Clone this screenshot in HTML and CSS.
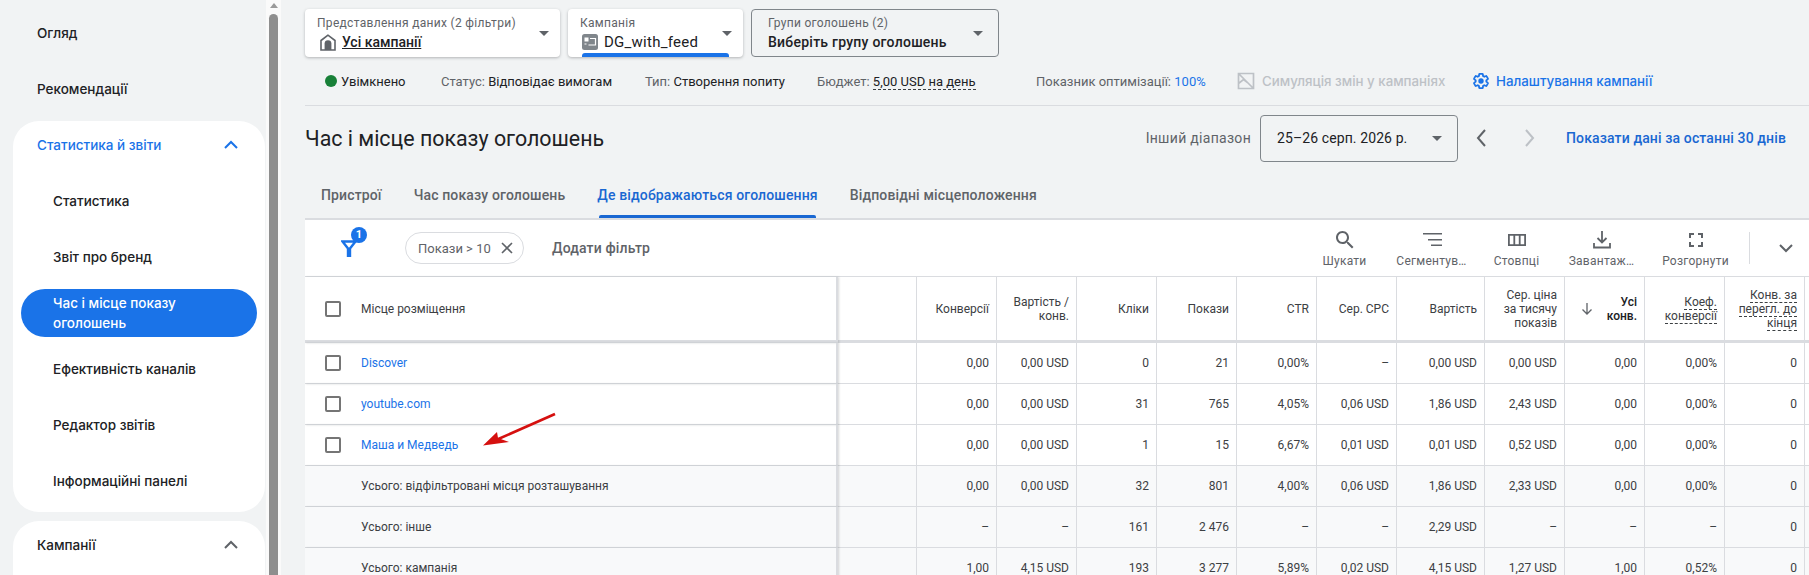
FILE: index.html
```html
<!DOCTYPE html>
<html lang="uk">
<head>
<meta charset="utf-8">
<title>Час і місце показу оголошень</title>
<link rel="stylesheet" href="styles.css">
</head>
<body>
<div class="app">
  <nav class="sidebar">
    <div class="nav-row">Огляд</div>
    <div class="nav-row">Рекомендації</div>
    <div class="panel panel-main">
      <div class="panel-head active-head"><span>Статистика й звіти</span>
        <svg class="chev" width="18" height="18" viewBox="0 0 18 18"><path d="M3 12l6-6 6 6" fill="none" stroke="currentColor" stroke-width="2"/></svg>
      </div>
      <div class="nav-sub">Статистика</div>
      <div class="nav-sub">Звіт про бренд</div>
      <div class="nav-sub-wrap"><div class="nav-pill">Час і місце показу оголошень</div></div>
      <div class="nav-sub">Ефективність каналів</div>
      <div class="nav-sub">Редактор звітів</div>
      <div class="nav-sub">Інформаційні панелі</div>
    </div>
    <div class="panel panel-second">
      <div class="panel-head"><span>Кампанії</span>
        <svg class="chev" width="18" height="18" viewBox="0 0 18 18"><path d="M3 12l6-6 6 6" fill="none" stroke="currentColor" stroke-width="2"/></svg>
      </div>
    </div>
  </nav>
  <div class="scrollbar">
    <div class="scroll-up"></div>
    <div class="scroll-thumb"></div>
  </div>
  <main class="main">
    <div class="pickers">
      <div class="picker picker-view">
        <div class="picker-text">
          <div class="picker-label">Представлення даних (2 фільтри)</div>
          <div class="picker-value">
            <svg class="picker-icon" width="16" height="17" viewBox="0 0 16 17"><path d="M8 1.2L1 6.5V16h14V6.5z" fill="#fff" stroke="#5f6368" stroke-width="1.6"/><path d="M4.6 16V9.6a3.4 3.4 0 0 1 6.8 0V16z" fill="#5f6368"/></svg>
            <span class="link-under">Усі кампанії</span>
          </div>
        </div>
        <span class="tri"></span>
      </div>
      <div class="picker picker-camp">
        <div class="picker-text">
          <div class="picker-label">Кампанія</div>
          <div class="picker-value">
            <svg class="picker-icon" width="16" height="16" viewBox="0 0 16 16"><rect x="0" y="0" width="16" height="16" rx="2.5" fill="#80868b"/><rect x="2.5" y="3.5" width="4" height="4" fill="#fff"/><path d="M8 4.5h5.5v6.5H6.5M2.5 10h2" fill="none" stroke="#fff" stroke-width="1.2"/></svg>
            <span>DG_with_feed</span>
          </div>
        </div>
        <span class="tri"></span>
        <span class="picker-bar"></span>
      </div>
      <div class="picker picker-group">
        <div class="picker-text">
          <div class="picker-label">Групи оголошень (2)</div>
          <div class="picker-value"><span>Виберіть групу оголошень</span></div>
        </div>
        <span class="tri"></span>
      </div>
    </div>

    <div class="status-row">
      <span class="dot"></span>
      <span class="st st-on">Увімкнено</span>
      <span class="st st-status"><span class="muted">Статус:</span> Відповідає вимогам</span>
      <span class="st st-type"><span class="muted">Тип:</span> Створення попиту</span>
      <span class="st st-budget"><span class="muted">Бюджет:</span> <span class="dashed">5,00 USD на день</span></span>
      <span class="st st-score"><span class="muted">Показник оптимізації:</span> <span class="blue">100%</span></span>
      <svg class="sim-icon" width="18" height="18" viewBox="0 0 18 18"><path d="M1.5 1.5h15v15h-15zM1.5 1.5l15 15M1.5 11.5l5-4 4 3" fill="none" stroke="#bdc1c6" stroke-width="1.7"/></svg>
      <span class="action action-off">Симуляція змін у кампаніях</span>
      <svg class="gear-icon" width="18" height="18" viewBox="0 0 24 24"><path d="M19.14 12.94c.04-.3.06-.61.06-.94 0-.32-.02-.64-.07-.94l2.03-1.58c.18-.14.23-.41.12-.61l-1.92-3.32c-.12-.22-.37-.29-.59-.22l-2.39.96c-.5-.38-1.03-.7-1.62-.94l-.36-2.54c-.04-.24-.24-.41-.48-.41h-3.84c-.24 0-.43.17-.47.41l-.36 2.54c-.59.24-1.13.57-1.62.94l-2.39-.96c-.22-.08-.47 0-.59.22L2.74 8.87c-.12.21-.08.47.12.61l2.03 1.58c-.05.3-.09.63-.09.94s.02.64.07.94l-2.03 1.58c-.18.14-.23.41-.12.61l1.92 3.32c.12.22.37.29.59.22l2.39-.96c.5.38 1.03.7 1.62.94l.36 2.54c.05.24.24.41.48.41h3.84c.24 0 .44-.17.47-.41l.36-2.54c.59-.24 1.13-.56 1.62-.94l2.39.96c.22.08.47 0 .59-.22l1.92-3.32c.12-.22.07-.47-.12-.61l-2.01-1.58z" fill="none" stroke="#1a73e8" stroke-width="2.4"/><circle cx="12" cy="12" r="3.6" fill="#1a73e8"/></svg>
      <span class="action action-on">Налаштування кампанії</span>
    </div>

    <div class="title-row">
      <h1 class="page-title">Час і місце показу оголошень</h1>
      <span class="range-label">Інший діапазон</span>
      <div class="date-select"><span>25–26 серп. 2026 р.</span><span class="tri"></span></div>
      <svg class="nav-arrow arrow-prev" width="16" height="24" viewBox="0 0 16 24"><path d="M12 4l-7 8 7 8" fill="none" stroke="#5f6368" stroke-width="2"/></svg>
      <svg class="nav-arrow arrow-next" width="16" height="24" viewBox="0 0 16 24"><path d="M4 4l7 8-7 8" fill="none" stroke="#bdc1c6" stroke-width="2"/></svg>
      <a class="range-link">Показати дані за останні 30 днів</a>
    </div>

    <div class="tabs">
      <div class="tab">Пристрої</div>
      <div class="tab">Час показу оголошень</div>
      <div class="tab tab-active">Де відображаються оголошення</div>
      <div class="tab">Відповідні місцеположення</div>
    </div>

    <section class="card">
      <div class="toolbar">
        <div class="filter-icon">
          <svg width="16" height="17" viewBox="0 0 16 17"><path d="M1.5 1.5h13L9 8.5V16H7V8.5z" fill="none" stroke="#1a73e8" stroke-width="2.4" stroke-linejoin="miter"/></svg>
          <span class="badge">1</span>
        </div>
        <div class="chip"><span>Покази &gt; 10</span>
          <svg width="12" height="12" viewBox="0 0 12 12"><path d="M1 1l10 10M11 1L1 11" stroke="#5f6368" stroke-width="1.6"/></svg>
        </div>
        <span class="add-filter">Додати фільтр</span>
        <div class="tools">
          <div class="tool">
            <svg width="24" height="24" viewBox="0 0 24 24"><path fill="#5f6368" d="M15.5 14h-.79l-.28-.27C15.41 12.59 16 11.11 16 9.5 16 5.91 13.09 3 9.5 3S3 5.91 3 9.5 5.91 16 9.5 16c1.61 0 3.09-.59 4.23-1.57l.27.28v.79l5 4.99L20.49 19l-4.99-5zm-6 0C7.01 14 5 11.99 5 9.5S7.01 5 9.5 5 14 7.01 14 9.5 11.99 14 9.5 14z"/></svg>
            <span>Шукати</span>
          </div>
          <div class="tool tool-seg">
            <svg width="24" height="24" viewBox="0 0 24 24"><path fill="#5f6368" d="M3 5h19v1.600H3zM8 11h14v1.600H8zM11 16.500h11v1.600H11z"/></svg>
            <span>Сегментув…</span>
          </div>
          <div class="tool">
            <svg width="24" height="24" viewBox="0 0 24 24"><path fill="none" stroke="#5f6368" stroke-width="1.8" d="M3.900 6.900h16.200v10.200H3.900zM9.300 6.900v10.200M14.700 6.900v10.200"/></svg>
            <span>Стовпці</span>
          </div>
          <div class="tool">
            <svg width="24" height="24" viewBox="0 0 24 24"><path fill="none" stroke="#5f6368" stroke-width="1.8" d="M12 3v11M7.500 10l4.500 4.500 4.500-4.500M4 15v4.500h16V15"/></svg>
            <span>Завантаж…</span>
          </div>
          <div class="tool tool-expand">
            <svg width="24" height="24" viewBox="0 0 24 24"><path fill="#5f6368" d="M7 14H5v5h5v-2H7v-3zm-2-4h2V7h3V5H5v5zm12 7h-3v2h5v-5h-2v3zM14 5v2h3v3h2V5h-5z"/></svg>
            <span>Розгорнути</span>
          </div>
          <span class="tool-div"></span>
          <svg class="tool-chev" width="24" height="24" viewBox="0 0 24 24"><path d="M6 9l6 6 6-6" fill="none" stroke="#5f6368" stroke-width="2"/></svg>
        </div>
      </div>

      <table class="grid">
        <colgroup>
          <col class="c-place"><col class="c-blank"><col class="c-n"><col class="c-n"><col class="c-n"><col class="c-n"><col class="c-n"><col class="c-n"><col class="c-w"><col class="c-n"><col class="c-n"><col class="c-n"><col class="c-n"><col class="c-rest">
        </colgroup>
        <thead>
          <tr>
            <th class="place"><span class="cell-flex"><span class="check"></span>Місце розміщення</span></th>
            <th></th>
            <th>Конверсії</th>
            <th>Вартість / конв.</th>
            <th>Кліки</th>
            <th>Покази</th>
            <th>CTR</th>
            <th>Сер. CPC</th>
            <th>Вартість</th>
            <th>Сер. ціна за тисячу показів</th>
            <th class="sorted"><span class="sort-flex"><svg width="12" height="14" viewBox="0 0 12 14"><path d="M6 1v11M1.500 7.500L6 12l4.500-4.500" fill="none" stroke="#5f6368" stroke-width="1.300"/></svg><span class="sort-label">Усі конв.</span></span></th>
            <th><span class="dashed">Коеф. конверсії</span></th>
            <th><span class="dashed">Конв. за перегл. до кінця</span></th>
            <th class="rest"></th>
          </tr>
        </thead>
        <tbody>
          <tr>
            <td class="place"><span class="cell-flex"><span class="check"></span><a class="blue">Discover</a></span></td>
            <td></td><td>0,00</td><td>0,00 USD</td><td>0</td><td>21</td><td>0,00%</td><td>–</td><td>0,00 USD</td><td>0,00 USD</td><td>0,00</td><td>0,00%</td><td>0</td><td class="rest"></td>
          </tr>
          <tr>
            <td class="place"><span class="cell-flex"><span class="check"></span><a class="blue">youtube.com</a></span></td>
            <td></td><td>0,00</td><td>0,00 USD</td><td>31</td><td>765</td><td>4,05%</td><td>0,06 USD</td><td>1,86 USD</td><td>2,43 USD</td><td>0,00</td><td>0,00%</td><td>0</td><td class="rest"></td>
          </tr>
          <tr>
            <td class="place"><span class="cell-flex"><span class="check"></span><a class="blue">Маша и Медведь</a></span></td>
            <td></td><td>0,00</td><td>0,00 USD</td><td>1</td><td>15</td><td>6,67%</td><td>0,01 USD</td><td>0,01 USD</td><td>0,52 USD</td><td>0,00</td><td>0,00%</td><td>0</td><td class="rest"></td>
          </tr>
          <tr class="total">
            <td class="place"><span class="cell-flex total-label">Усього: відфільтровані місця розташування</span></td>
            <td></td><td>0,00</td><td>0,00 USD</td><td>32</td><td>801</td><td>4,00%</td><td>0,06 USD</td><td>1,86 USD</td><td>2,33 USD</td><td>0,00</td><td>0,00%</td><td>0</td><td class="rest"></td>
          </tr>
          <tr class="total">
            <td class="place"><span class="cell-flex total-label">Усього: інше</span></td>
            <td></td><td>–</td><td>–</td><td>161</td><td>2 476</td><td>–</td><td>–</td><td>2,29 USD</td><td>–</td><td>–</td><td>–</td><td>0</td><td class="rest"></td>
          </tr>
          <tr class="total">
            <td class="place"><span class="cell-flex total-label">Усього: кампанія</span></td>
            <td></td><td>1,00</td><td>4,15 USD</td><td>193</td><td>3 277</td><td>5,89%</td><td>0,02 USD</td><td>4,15 USD</td><td>1,27 USD</td><td>1,00</td><td>0,52%</td><td>0</td><td class="rest"></td>
          </tr>
        </tbody>
      </table>

      <svg class="red-arrow" width="76" height="36" viewBox="0 0 76 36"><path d="M73 2L14 28" stroke="#d5100f" stroke-width="2.600" fill="none"/><path d="M1 33.500L15 20l1 6 11 4z" fill="#d5100f"/></svg>
    </section>
  </main>
</div>
</body>
</html>
```

FILE: styles.css
```css
* { box-sizing: border-box; }
html, body { margin: 0; height: 100%; overflow: hidden; }
body { font-family: Roboto, "Liberation Sans", sans-serif; font-size: 12px; color: #3c4043; background: #f1f3f4; }
.app { display: flex; height: 575px; overflow: hidden; }

/* sidebar */
.sidebar { width: 266px; flex: none; padding-top: 5px; font-family: Inter, Roboto, sans-serif; font-size: 13.5px; font-weight: 500; color: #202124; background: #f1f3f4; }
.nav-row { height: 56px; padding-left: 37px; display: flex; align-items: center; }
.panel { margin-left: 13px; width: 252px; background: #fff; border-radius: 26px; }
.panel-main { margin-top: 4px; padding-bottom: 3px; height: 391px; }
.panel-second { margin-top: 9px; height: 80px; }
.panel-head { height: 48px; margin-bottom: 4px; padding: 0 25px 0 24px; display: flex; align-items: center; justify-content: space-between; color: #202124; }
.active-head { color: #1a73e8; }
.chev { color: #5f6368; }
.active-head .chev { color: #1a73e8; }
.nav-sub { height: 56px; padding-left: 40px; display: flex; align-items: center; }
.nav-sub-wrap { height: 56px; padding: 4px 8px; }
.nav-pill { height: 48px; background: #1a73e8; color: #fff; border-radius: 24px; padding: 0 40px 0 32px; display: flex; align-items: center; line-height: 20px; }

/* scrollbar */
.scrollbar { width: 15px; flex: none; background: #fafafa; display: flex; flex-direction: column; align-items: center; }
.scroll-up { margin-top: 3px; width: 0; height: 0; border-left: 4.5px solid transparent; border-right: 4.5px solid transparent; border-bottom: 5px solid #9a9a9a; }
.scroll-thumb { margin-top: 6px; width: 9px; flex: 1; background: #8e8e8e; border-radius: 5px 5px 0 0; }

/* main */
.main { flex: 1; min-width: 0; padding: 9px 0 0 24px; background: #f1f3f4; }
.pickers { display: flex; gap: 8px; height: 48px; }
.picker { position: relative; height: 48px; border-radius: 4px; display: flex; align-items: center; justify-content: space-between; }
.picker-view, .picker-camp { background: #fff; box-shadow: 0 1px 3px rgba(60,64,67,.35); }
.picker-view { width: 255px; padding: 0 11px 0 12px; }
.picker-camp { width: 175px; padding: 0 11px 0 12px; }
.picker-group { width: 248px; padding: 0 15px 0 16px; border: 1px solid #80868b; }
.picker-label { color: #5f6368; font-size: 12px; line-height: 16px; margin-bottom: 2px; letter-spacing: .3px; }
.picker-value { display: flex; align-items: center; font-size: 14px; font-weight: 500; color: #202124; line-height: 18px; letter-spacing: .25px; }
.picker-icon { flex: none; margin: 0 6px 0 3px; }
.picker-camp .picker-icon { margin: 0 6px 0 2px; }
.picker-camp .picker-value { font-weight: 400; font-size: 15px; }
.link-under { text-decoration: underline; letter-spacing: 0; }
.tri { width: 0; height: 0; border-left: 5px solid transparent; border-right: 5px solid transparent; border-top: 5px solid #5f6368; flex: none; }
.picker-bar { position: absolute; left: 14px; right: 14px; bottom: 0; height: 4px; background: #1a73e8; border-radius: 3px 3px 0 0; }

.status-row { height: 49px; display: flex; align-items: center; border-bottom: 1px solid #dadce0; padding-left: 20px; color: #202124; font-size: 13px; }
.dot { width: 12px; height: 12px; border-radius: 50%; background: #188038; flex: none; margin-right: 4px; }
.muted { color: #5f6368; }
.blue { color: #1a73e8; }
.dashed { border-bottom: 1px dashed #3c4043; }
.st { white-space: nowrap; }
.st-on { width: 100px; }
.st-status { width: 204px; }
.st-type { width: 172px; }
.st-budget { width: 219px; }
.st-score { width: 201px; }
.sim-icon { flex: none; margin-right: 7px; }
.action { font-family: Inter, Roboto, sans-serif; font-size: 13.3px; font-weight: 500; white-space: nowrap; }
.action-off { color: #bdc1c6; width: 210px; }
.action-on { color: #1a73e8; }
.gear-icon { flex: none; margin-right: 6px; }

.title-row { height: 64px; display: flex; align-items: center; padding-right: 23px; }
.page-title { margin: 0; font-size: 21.4px; font-weight: 400; color: #202124; flex: 1; }
.range-label { font-size: 14px; color: #5f6368; margin-right: 9px; letter-spacing: .3px; }
.date-select { width: 198px; height: 47px; border: 1px solid #80868b; border-radius: 4px; display: flex; align-items: center; justify-content: space-between; padding: 0 15px 0 16px; font-size: 14px; letter-spacing: .1px; color: #202124; margin-right: 15px; }
.nav-arrow { flex: none; }
.arrow-next { margin: 0 28px 0 33px; }
.range-link { font-size: 14px; font-weight: 500; color: #1967d2; letter-spacing: .13px; }

.tabs { height: 50px; display: flex; border-bottom: 2px solid #dadce0; }
.tab { position: relative; height: 50px; padding: 15px 16px 0; font-size: 14px; line-height: 20px; color: #5f6368; font-weight: 500; letter-spacing: .14px; white-space: nowrap; }
.tab-active { color: #1967d2; }
.tab-active::after { content: ""; position: absolute; left: 18px; right: 18px; bottom: 2px; height: 3px; background: #1967d2; border-radius: 2px 2px 0 0; }

.card { position: relative; background: #fff; height: 400px; overflow: hidden; }
.toolbar { height: 57px; display: flex; align-items: center; border-bottom: 1px solid #dadce0; padding-left: 36px; }
.filter-icon { position: relative; width: 64px; height: 20px; margin-top: 4px; }
.badge { position: absolute; left: 10px; top: -13px; width: 16px; height: 16px; border-radius: 50%; background: #1a73e8; color: #fff; font-size: 11px; font-weight: 700; text-align: center; line-height: 16px; }
.chip { width: 119px; height: 32px; border: 1px solid #dadce0; border-radius: 16px; display: flex; align-items: center; justify-content: space-between; padding: 0 10px 0 12px; color: #5f6368; font-size: 13px; }
.add-filter { margin-left: 28px; font-size: 14px; font-weight: 500; letter-spacing: .15px; color: #5f6368; }
.tools { margin-left: auto; display: flex; align-items: center; }
.tool { width: 85px; display: flex; flex-direction: column; align-items: center; gap: 1px; color: #5f6368; font-size: 12px; letter-spacing: .25px; line-height: 16px; white-space: nowrap; }
.tool-seg { margin-left: 2px; }
.tool-expand { margin-left: 9px; }
.tool-div { width: 1px; height: 32px; background: #dadce0; margin-left: 11px; }
.tool-chev { margin: 0 11px 0 24px; }

.grid { table-layout: fixed; width: 1504px; border-collapse: separate; border-spacing: 0; font-size: 12px; color: #3c4043; }
.c-place { width: 533px; }
.c-blank { width: 79px; }
.c-n { width: 80px; }
.c-w { width: 88px; }
.c-rest { width: 4px; }
.grid th, .grid td { text-align: right; padding: 0 7px 0 8px; border-bottom: 1px solid #dadce0; border-right: 1px solid #dadce0; vertical-align: middle; }
.grid th { height: 66px; border-bottom-width: 3px; font-weight: 400; line-height: 14px; color: #3c4043; }
.grid td { height: 41px; }
.grid .place { position: relative; text-align: left; padding: 0 0 0 20px; border-right: 2px solid #dadce0; box-shadow: 1px 0 2px rgba(60,64,67,.2); }
.grid .rest { border-right: 0; padding: 0; }
.cell-flex { display: flex; align-items: center; }
.check { width: 16px; height: 16px; border: 2px solid #757575; border-radius: 2px; margin-right: 20px; flex: none; }
.total-label { padding-left: 36px; }
.total td { background: #f8f9fa; }
.grid a.blue { color: #1a73e8; }
.sort-flex { display: flex; align-items: center; justify-content: space-between; padding-left: 8px; }
.sort-label { width: 40px; font-weight: 500; color: #202124; }

.red-arrow { position: absolute; left: 177px; top: 192px; }
```
